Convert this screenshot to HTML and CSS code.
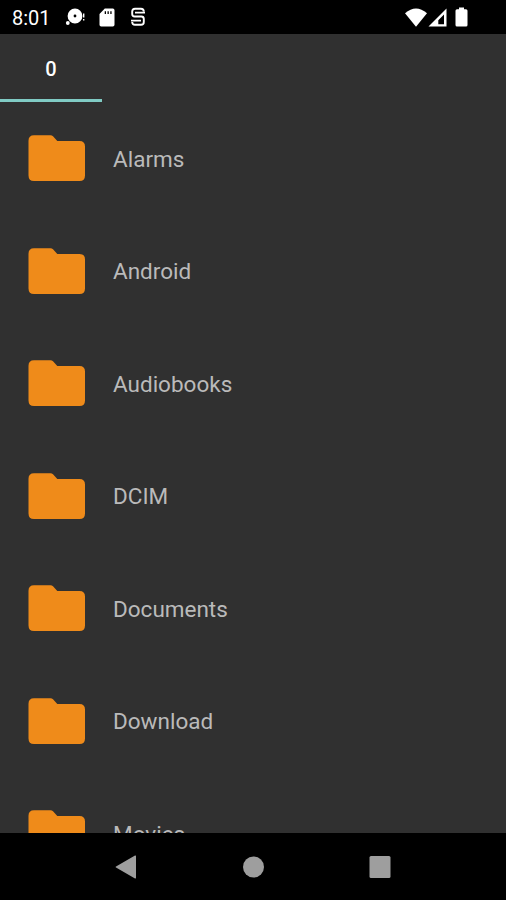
FILE: index.html
```html
<!DOCTYPE html>
<html lang="en">

<head>
    <meta charset="UTF-8">
    <meta name="viewport" content="width=device-width, initial-scale=1.0">
    <title>Files</title>
    <link rel="stylesheet" href="styles.css">
</head>

<body>
    <svg class="sprite" width="0" height="0">
        <symbol id="folder" viewBox="0 0 57 46">
            <path d="M6 .3H22.500Q24 .3 25 1.300L29.300 5.900H51.500Q57 5.900 57 11.400V40.500Q57 46 51.500 46H6Q.5 46 .5 40.500V5.800Q.5 .3 6 .3Z" />
        </symbol>
    </svg>

    <header class="status-bar">
        <span class="time">8:01</span>
        <svg class="icon-disc" width="20" height="18" viewBox="0 0 20 18">
            <path fill-rule="evenodd" d="M10 .6a7.400 7.400 0 1 1 0 14.800a7.400 7.400 0 1 1 0-14.800zM10 6.600a1.400 1.400 0 1 0 0 2.800a1.400 1.400 0 1 0 0-2.800z" />
            <circle cx="2.800" cy="15" r="1.900" />
            <path d="M18 5.500h1.400v4h-1.400zM18 11h1.400v1.600h-1.400z" />
        </svg>
        <svg class="icon-sd" width="16" height="19" viewBox="0 0 16 19">
            <path fill-rule="evenodd" d="M5.800.5h8q1.700 0 1.700 1.700v14.600q0 1.700-1.700 1.700H2.200Q.5 18.500.5 16.800V6zM5.700 3.200v2.800h1.300V3.200zM8.500 3.200v2.800h1.300V3.200zM11.300 3.200v2.800h1.300V3.200z" />
        </svg>
        <svg class="icon-s" width="16" height="20" viewBox="0 0 16 20">
            <path d="M13.800 4.500Q13.800 1.700 11 1.700H5Q2.200 1.700 2.200 4.500V7Q2.200 9.500 4.700 9.500H11.300Q13.800 9.500 13.800 12V15Q13.800 17.800 11 17.800H5Q2.200 17.800 2.200 15M5 5.600H15M1 13.600H11" />
        </svg>
        <svg class="icon-wifi" width="22" height="19" viewBox="0 0 22 19">
            <path d="M0 5.200Q11-4.200 22 5.200L11 18.700Z" />
        </svg>
        <svg class="icon-signal" width="19" height="19" viewBox="0 0 19 19">
            <path fill-rule="evenodd" d="M18.500.5V18.500H.5ZM16 6.500L10.300 12.200V16.200H16Z" />
        </svg>
        <svg class="icon-battery" width="13" height="20" viewBox="0 0 13 20">
            <path d="M4 .5H9V2.300H11Q12.500 2.300 12.500 3.800V18Q12.500 19.500 11 19.500H2Q.5 19.500.5 18V3.800Q.5 2.300 2 2.300H4Z" />
        </svg>
    </header>

    <nav class="tabs">
        <div class="tab active">0</div>
    </nav>

    <ul class="file-list">
        <li class="file-row">
            <svg class="folder"><use href="#folder" /></svg>
            <span>Alarms</span>
        </li>
        <li class="file-row">
            <svg class="folder"><use href="#folder" /></svg>
            <span>Android</span>
        </li>
        <li class="file-row">
            <svg class="folder"><use href="#folder" /></svg>
            <span>Audiobooks</span>
        </li>
        <li class="file-row">
            <svg class="folder"><use href="#folder" /></svg>
            <span>DCIM</span>
        </li>
        <li class="file-row">
            <svg class="folder"><use href="#folder" /></svg>
            <span>Documents</span>
        </li>
        <li class="file-row">
            <svg class="folder"><use href="#folder" /></svg>
            <span>Download</span>
        </li>
        <li class="file-row">
            <svg class="folder"><use href="#folder" /></svg>
            <span>Movies</span>
        </li>
    </ul>

    <footer class="nav-bar">
        <svg width="22" height="24" viewBox="0 0 22 24">
            <path d="M20 .6Q21 0 21 1.200V22.800Q21 24 20 23.400L1 12.600Q0 12 1 11.400Z" />
        </svg>
        <svg width="22" height="22" viewBox="0 0 22 22">
            <circle cx="11.500" cy="11" r="10.500" />
        </svg>
        <svg width="22" height="22" viewBox="0 0 22 22">
            <rect x=".5" width="21" height="22" rx="1.500" />
        </svg>
    </footer>
</body>

</html>
```

FILE: styles.css
```css
* {
    box-sizing: border-box;
}

body {
    display: flex;
    flex-direction: column;
    height: 900px;
    margin: 0;
    overflow: hidden;
    background-color: #303030;
    font-family: Roboto, sans-serif;
}

svg {
    flex: none;
}

.sprite {
    display: none;
}

/* Status bar */
.status-bar {
    display: flex;
    flex: none;
    align-items: center;
    height: 34px;
    padding: 0 38px 0 12px;
    background-color: #000;
    color: #fff;
    fill: #fff;
}

.time {
    width: 53px;
    font-size: 20px;
    line-height: 36px;
    padding-top: 2px;
}

.icon-sd {
    margin-left: 14px;
}

.icon-s {
    margin-left: 15px;
    fill: none;
    stroke: #fff;
    stroke-width: 1.9;
}

.icon-wifi {
    margin-left: auto;
}

.icon-signal {
    margin-left: 1px;
}

.icon-battery {
    margin-left: 8px;
}

/* Tabs */
.tabs {
    display: flex;
    flex: none;
    height: 68px;
}

.tab {
    width: 102px;
    color: #fff;
    font-size: 20px;
    font-weight: 500;
    line-height: 70px;
    text-align: center;
}

.tab.active {
    border-bottom: 3px solid #80cbc4;
}

/* File list */
.file-list {
    flex: 1;
    min-height: 0;
    margin: 0;
    padding: 0;
    overflow: hidden;
    list-style: none;
}

.file-row {
    display: flex;
    align-items: center;
    gap: 28px;
    height: 112.5px;
    padding-left: 28px;
    color: #bababa;
    font-size: 22.5px;
}

.file-row span {
    padding-top: 1px;
}

.folder {
    width: 57px;
    height: 46px;
    fill: #ef8b1a;
}

/* Navigation bar */
.nav-bar {
    display: flex;
    flex: none;
    align-items: center;
    justify-content: space-between;
    height: 67px;
    padding: 0 115px;
    background-color: #000;
    fill: #9e9e9e;
}
```
